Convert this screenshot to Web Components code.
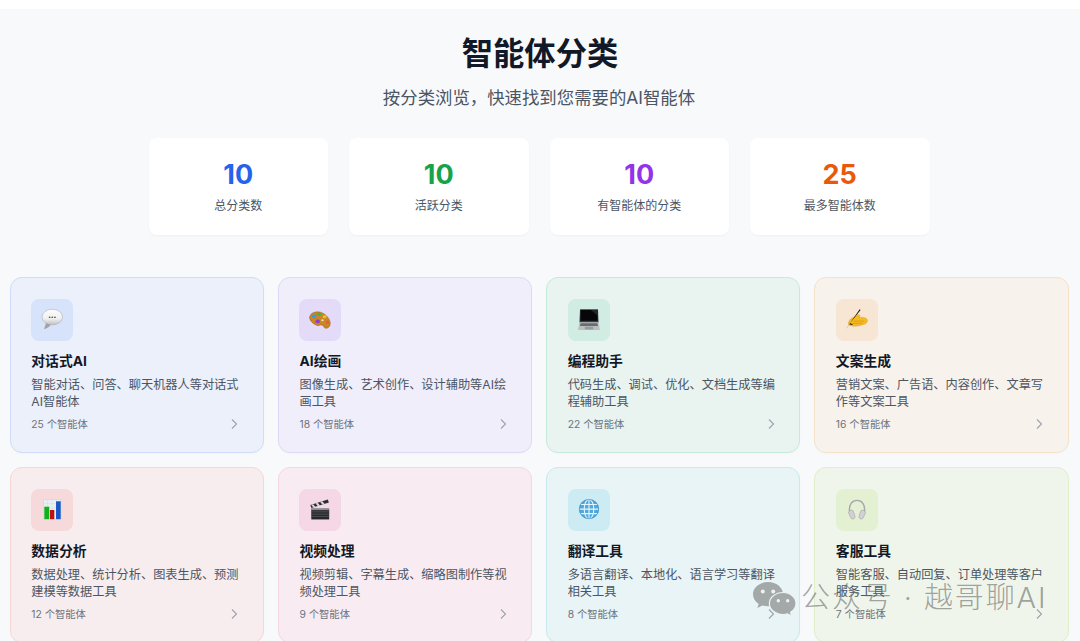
<!DOCTYPE html>
<html lang="zh-CN">
<head>
<meta charset="utf-8">
<title>智能体分类</title>
<style>
  html, body { margin: 0; height: 641px; overflow: hidden; background: #fff; }
  body { font-family: Inter, "Noto Sans CJK SC", sans-serif; }
</style>
</head>
<body>
<category-page>
  <span slot="title">智能体分类</span>
  <span slot="subtitle">按分类浏览，快速找到您需要的AI智能体</span>

  <stat-card slot="stats" color="#2563eb" value="10">总分类数</stat-card>
  <stat-card slot="stats" color="#16a34a" value="10">活跃分类</stat-card>
  <stat-card slot="stats" color="#9333ea" value="10">有智能体的分类</stat-card>
  <stat-card slot="stats" color="#ea580c" value="25">最多智能体数</stat-card>

  <category-card slot="cards" tone="blue" icon="bubble" count="25 个智能体">
    <span slot="name">对话式AI</span>智能对话、问答、聊天机器人等对话式AI智能体
  </category-card>
  <category-card slot="cards" tone="purple" icon="palette" count="18 个智能体">
    <span slot="name">AI绘画</span>图像生成、艺术创作、设计辅助等AI绘画工具
  </category-card>
  <category-card slot="cards" tone="green" icon="laptop" count="22 个智能体">
    <span slot="name">编程助手</span>代码生成、调试、优化、文档生成等编程辅助工具
  </category-card>
  <category-card slot="cards" tone="orange" icon="hand" count="16 个智能体">
    <span slot="name">文案生成</span>营销文案、广告语、内容创作、文章写作等文案工具
  </category-card>
  <category-card slot="cards" tone="red" icon="chart" count="12 个智能体">
    <span slot="name">数据分析</span>数据处理、统计分析、图表生成、预测建模等数据工具
  </category-card>
  <category-card slot="cards" tone="pink" icon="clapper" count="9 个智能体">
    <span slot="name">视频处理</span>视频剪辑、字幕生成、缩略图制作等视频处理工具
  </category-card>
  <category-card slot="cards" tone="cyan" icon="globe" count="8 个智能体">
    <span slot="name">翻译工具</span>多语言翻译、本地化、语言学习等翻译相关工具
  </category-card>
  <category-card slot="cards" tone="lime" icon="headphones" count="7 个智能体">
    <span slot="name">客服工具</span>智能客服、自动回复、订单处理等客户服务工具
  </category-card>
</category-page>
<wechat-mark>公众号 · 越哥聊AI</wechat-mark>

<script>
const icons = {
  bubble: `
    <defs><linearGradient id="g" x1="0" y1="0" x2="0" y2="1"><stop offset="0" stop-color="#fdfdfd"/><stop offset=".6" stop-color="#f0f0f1"/><stop offset="1" stop-color="#bfc0c3"/></linearGradient></defs>
    <path d="M6 14 3.300 22c3-.6 5.700-2.300 7.700-5z" fill="#a2a2a5"/>
    <ellipse cx="12.300" cy="8.800" rx="11.200" ry="8.500" fill="url(#g)" stroke="#a9aaad" stroke-width=".6"/>
    <circle cx="9.400" cy="9" r=".95" fill="#55565a"/><circle cx="12.300" cy="9" r=".95" fill="#55565a"/><circle cx="15.200" cy="9" r=".95" fill="#55565a"/>`,
  palette: `
    <path d="M1 7.500C3 3.200 9.500 2 14 4c4.700 2.100 9.300 6.800 9.200 12-.1 3.300-2.700 5.500-5.200 5-2.300-.5-2-3-3.800-3.500-2.100-.6-3.500 1.400-5.800.3C4 16 -.8 11.500 1 7.500z" fill="#c98526" stroke="#93591a" stroke-width=".5"/>
    <ellipse cx="5.500" cy="8" rx="2.400" ry="1.900" fill="#2f9fe0"/>
    <ellipse cx="11" cy="5.700" rx="2.400" ry="1.700" fill="#3fb54a"/>
    <ellipse cx="17" cy="8.500" rx="2.100" ry="1.700" fill="#e8c52e"/>
    <ellipse cx="20.300" cy="14.500" rx="2" ry="1.900" fill="#e2603c"/>
    <ellipse cx="9.500" cy="13.500" rx="2.500" ry="2" fill="#8c3fc4"/>
    <ellipse cx="14.700" cy="12.300" rx="1.300" ry="1.100" fill="#f2e3c6"/>`,
  laptop: `
    <path d="M2.200 .4h19.600l.6 14.400H1.600z" fill="#3b3c40"/>
    <path d="M3 1.200h18l.4 11.600H2.600z" fill="#07070a"/>
    <path d="M14 1.200h7l.2 6z" fill="#26272b"/>
    <path d="M1.600 14.800h20.800l1.500 8H.1z" fill="#bcbdc0"/>
    <path d="M2.800 15.600h18.400l.6 3H2.200z" fill="#6a6b6f"/>
    <rect x="7.500" y="19.300" width="9" height="3" fill="#98999d"/>`,
  hand: `
    <path d="M7 9.500c2-.8 3.400-1.200 4.500-2.200l1.500-1.300 2.400 1-1 2.400c2.500-.3 5.500-.5 7.300.7 1.600 1 2.100 2.500 1.500 3.700-.7 1.500-2.300 2.600-4.200 3.100-3 .9-6 1.900-9.500 1.900-2.800 0-6.200-.4-6.800-2.100-.7-2.300 1.800-5.900 4.300-7.200z" fill="#f6bb22" stroke="#d8900f" stroke-width=".4"/>
    <path d="M8.500 13.300c3.500.3 6.800-.6 11.500.1M6.800 15.700c3.500.3 7.500-.4 11.200-.1" stroke="#c9830f" stroke-width=".6" fill="none"/>
    <path d="M.6 20.900 14.900.4l1 .7L4.400 15.600l3 .9-.6 1-3.100-1-2.900 4.600z" fill="#131316"/>`,
  chart: `
    <rect x="2.500" y=".3" width="19.300" height="21.700" fill="#e9eef3" stroke="#c7ced6" stroke-width=".5"/>
    <path d="M2.500 5h19.300M2.500 9.500h19.300M2.500 14h19.300M7 .3v21.700M12 .3v21.700M17 .3v21.700" stroke="#cdd9e6" stroke-width=".4"/>
    <rect x="3.600" y="8.400" width="5.400" height="13.600" fill="#12b01c"/>
    <rect x="9.800" y="12" width="4.700" height="10" fill="#bd1212"/>
    <rect x="16.400" y="2.500" width="5.100" height="19.500" fill="#1857c4"/>`,
  clapper: `
    <path d="M2.500 10.500h19.500v11.800H2.500z" fill="#27282b"/>
    <path d="M2.500 14h19.500M2.500 16.500h19.500M2.500 19h19.500" stroke="#56575b" stroke-width=".9"/>
    <path d="M1.500 6.500 20.500.6l1.200 3.200L2.600 9.900z" fill="#2c2d30"/>
    <path d="M4.500 5.600l2.600 3-2.300.7-2.500-3zM9.500 4l2.600 3-2.400.8L7.200 4.800zM14.500 2.400l2.600 3-2.400.8-2.500-3z" fill="#d7d8da"/>
    <path d="M2.500 10.500h19.500v1.700H2.500z" fill="#8a8b8f"/>`,
  globe: `
    <circle cx="12" cy="11" r="10.800" fill="#4fa9dc"/>
    <g fill="none" stroke="#e6f5fb" stroke-width="1.200">
      <ellipse cx="12" cy="11" rx="5.200" ry="10.600"/>
      <path d="M12 .4v21.200M1.400 11h21.200M2.700 6h18.600M2.700 16h18.600"/>
    </g>
    <circle cx="12" cy="11" r="10.500" fill="none" stroke="#3a8fc8" stroke-width=".8"/>`,
  headphones: `
    <path d="M3.800 13.500C3 6.300 6.500 1.500 12 1.500s9 4.800 8.200 12" fill="none" stroke="#a6a6ac" stroke-width="1.500"/>
    <path d="M4.600 12.500c1-.7 2.800-.6 3.400.8l1.800 5.400c.4 1.400-.5 2.700-1.800 3-1.300.3-2.500-.3-3.100-1.700l-2-4.600c-.5-1.100.7-2.200 1.700-2.900z" fill="#d2d0d6" stroke="#8e8e94" stroke-width=".5"/>
    <path d="M19.400 12.500c-1-.7-2.800-.6-3.400.8l-1.800 5.400c-.4 1.400.5 2.700 1.800 3 1.300.3 2.500-.3 3.100-1.700l2-4.600c.5-1.100-.7-2.200-1.700-2.900z" fill="#d2d0d6" stroke="#8e8e94" stroke-width=".5"/>`
};

const tones = {
  blue:   ["#ebf0fa", "#cfddf8", "#d6e3fb"],
  purple: ["#f0eefa", "#e0d8f8", "#e4dbf9"],
  green:  ["#e9f3ef", "#c6e9dd", "#d0ece3"],
  orange: ["#f7f2ec", "#f6e2c9", "#f6e6d3"],
  red:    ["#f8edee", "#f7d6d6", "#f6d9da"],
  pink:   ["#f8ecf2", "#f5d6e4", "#f5d7e5"],
  cyan:   ["#e8f4f6", "#c8e8f2", "#cdebf3"],
  lime:   ["#eff5ea", "#e0eeca", "#e4f0d2"]
};

class CategoryPage extends HTMLElement {
  constructor() {
    super();
    this.attachShadow({ mode: "open" }).innerHTML = `
      <style>
        :host { display: block; margin-top: 9px; padding-bottom: 40px; background: #f8f9fb; }
        header { padding-top: 23px; text-align: center; }
        h1 { margin: 0; font-size: 31.3px; line-height: 44px; font-weight: 700; color: #111827; }
        p { margin: 9px 2px 0 0; font-size: 17.4px; line-height: 25px; color: #4b5563; }
        .stats { display: grid; grid-template-columns: repeat(4, 179.5px); gap: 21px; justify-content: center; padding-right: 2px; margin-top: 28px; }
        .cards { display: grid; grid-template-columns: repeat(4, 254.2px); gap: 14.5px 14px; padding: 0 0 0 9.8px; margin-top: 42.3px; }
      </style>
      <header>
        <h1><slot name="title"></slot></h1>
        <p><slot name="subtitle"></slot></p>
      </header>
      <section class="stats"><slot name="stats"></slot></section>
      <section class="cards"><slot name="cards"></slot></section>`;
  }
}

class StatCard extends HTMLElement {
  constructor() {
    super();
    this.attachShadow({ mode: "open" }).innerHTML = `
      <style>
        :host { display: block; height: 97px; box-sizing: border-box; padding-top: 21px; background: #fff; border-radius: 8px; text-align: center; box-shadow: 0 1px 2px rgba(0,0,0,.04); }
        .value { font-size: 27px; line-height: 32px; font-weight: 700; }
        .label { margin-top: 7px; font-size: 12px; line-height: 16px; color: #4b5563; }
      </style>
      <div class="value"></div>
      <div class="label"><slot></slot></div>`;
  }
  connectedCallback() {
    const value = this.shadowRoot.querySelector(".value");
    value.textContent = this.getAttribute("value");
    value.style.color = this.getAttribute("color");
  }
}

class CategoryIcon extends HTMLElement {
  static observedAttributes = ["name"];

  constructor() {
    super();
    this.attachShadow({ mode: "open" });
  }
  attributeChangedCallback() {
    this.shadowRoot.innerHTML = `
      <style>
        :host { display: block; width: 22px; height: 22px; }
        svg { display: block; width: 100%; height: 100%; overflow: visible; }
      </style>
      <svg viewBox="0 0 24 24" aria-hidden="true">${icons[this.getAttribute("name")] || ""}</svg>`;
  }
}

class CategoryCard extends HTMLElement {
  constructor() {
    super();
    this.attachShadow({ mode: "open" }).innerHTML = `
      <style>
        :host { display: block; box-sizing: border-box; height: 175.5px; padding: 20.5px 20.5px 0; border: 1px solid var(--line); border-radius: 12px; background: var(--bg); box-shadow: 0 1px 2px rgba(0,0,0,.02); }
        .icon { display: flex; align-items: center; justify-content: center; width: 42px; height: 42px; border-radius: 8px; background: var(--box); }
        h3 { margin: 10px 0 0; font-size: 13.8px; line-height: 20px; font-weight: 700; color: #111827; }
        .desc { margin-top: 4.8px; font-size: 12.2px; line-height: 17.5px; color: #4b5563; }
        .foot { display: flex; align-items: center; justify-content: space-between; margin-top: 6.5px; height: 14px; font-size: 10.3px; line-height: 14px; color: #6b7280; }
        .foot svg { display: block; width: 12px; height: 12px; margin-right: 2px; }
      </style>
      <div class="icon"><category-icon></category-icon></div>
      <h3><slot name="name"></slot></h3>
      <div class="desc"><slot></slot></div>
      <div class="foot"><span class="count"></span>
        <svg viewBox="0 0 12 12" fill="none" stroke="#9ca3af" stroke-width="1.1"><path d="M4 1.500 8.500 6 4 10.500"/></svg>
      </div>`;
  }
  connectedCallback() {
    const [bg, line, box] = tones[this.getAttribute("tone")];
    this.style.setProperty("--bg", bg);
    this.style.setProperty("--line", line);
    this.style.setProperty("--box", box);
    this.shadowRoot.querySelector("category-icon").setAttribute("name", this.getAttribute("icon"));
    this.shadowRoot.querySelector(".count").textContent = this.getAttribute("count");
  }
}

// watermark sits over the cards
class WechatMark extends HTMLElement {
  constructor() {
    super();
    this.attachShadow({ mode: "open" }).innerHTML = `
      <style>
        :host { position: absolute; left: 753px; top: 578px; display: flex; align-items: center; gap: 5px; height: 38px; }
        svg { display: block; width: 43px; height: 34px; margin-top: 3px; }
        span { margin-top: 2px; font-size: 29px; line-height: 38px; font-weight: 300; letter-spacing: 1.9px; color: rgba(105,108,108,.62); white-space: nowrap; }
      </style>
      <svg viewBox="0 0 43 34" aria-hidden="true">
        <path d="M15 0C6.800 0 0 5.500 0 12.300c0 3.900 2.200 7.300 5.700 9.600L4.300 26l5-2.600c1.800.5 3.700.8 5.700.8 8.300 0 15-5.400 15-11.900C30 5.500 23.300 0 15 0z" fill="#a3a8a8"/>
        <circle cx="9.800" cy="9.400" r="2" fill="#eef2f1"/><circle cx="20.200" cy="9.400" r="2" fill="#eef2f1"/>
        <path d="M30 10.500c-7.500 0-13.600 4.900-13.600 11s6.100 11 13.600 11c1.600 0 3.100-.2 4.500-.7l4.200 2.200-1.100-3.700c3.200-2 5.400-5.200 5.400-8.800 0-6.100-5.700-11-13-11z" fill="#a3a8a8" stroke="#eef2f1" stroke-width="1.200"/>
        <circle cx="25.300" cy="18.800" r="1.700" fill="#eef2f1"/><circle cx="34.700" cy="18.800" r="1.700" fill="#eef2f1"/>
      </svg>
      <span><slot></slot></span>`;
  }
}

customElements.define("category-icon", CategoryIcon);
customElements.define("stat-card", StatCard);
customElements.define("category-card", CategoryCard);
customElements.define("category-page", CategoryPage);
customElements.define("wechat-mark", WechatMark);
</script>
</body>
</html>
